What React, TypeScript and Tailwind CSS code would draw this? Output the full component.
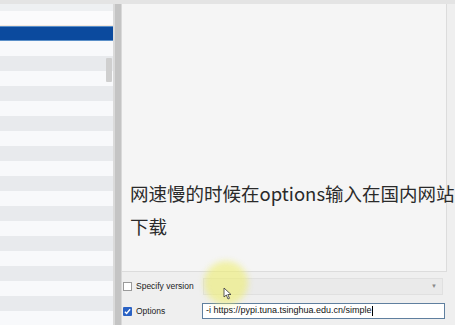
import React from 'react';

const rows = Array.from({ length: 19 }, (_, i) => i);

const App: React.FC = () => {
  return (
    <div className="relative w-[455px] h-[325px] overflow-hidden bg-[#efefef] flex flex-col" style={{ fontFamily: '"Liberation Sans", Arial, sans-serif' }}>
      {/* top strip */}
      <div className="h-[4px] bg-[#e4e4e4]" />

      <div className="flex flex-1 min-h-0">
        {/* package list */}
        <div className="relative w-[113px] shrink-0 flex flex-col overflow-hidden bg-[#f7f8fa]">
          <div className="h-[7px] shrink-0 bg-[#eef0f2]" />
          <div className="h-[15px] shrink-0 bg-[#fbfbfc] border-b border-[#f6e8dc]" />
          <div className="h-[15px] shrink-0 bg-[#0b4a9e] border-y border-[#5a8fc8]" />
          {rows.map((i) => (
            <div key={i} className={`h-[15px] shrink-0 ${i % 2 === 0 ? 'bg-[#f8f9fb]' : 'bg-[#e8eaed]'}`} />
          ))}
          {/* scrollbar thumb */}
          <div className="absolute left-[106px] top-[54px] w-[6px] h-[24px] bg-[#cfcfcf] rounded-[1px]" />
        </div>

        {/* splitter */}
        <div className="w-[9px] shrink-0 flex">
          <div className="w-[2px] bg-[#dadada]" />
          <div className="w-[6px] bg-[#c4c4c4]" />
          <div className="w-[1px] bg-[#d9d9d9]" />
        </div>

        {/* right side */}
        <div className="flex-1 min-w-0 flex flex-col">
          <div className="h-[268px] mr-[8px] bg-[#f5f5f5] border-r border-b border-[#dcdcdc]">
            <div
              className="pt-[173px] pl-[8px] w-[334px] text-[18.5px] leading-[33px] text-[#2a2a2a]"
              style={{ fontFamily: '"Noto Sans CJK SC", "Noto Sans", sans-serif' }}
            >
              网速慢的时候在options输入在国内网站下载
            </div>
          </div>

          <div className="flex flex-col pl-[1px] pt-[6px] gap-[8px] text-[8.5px] text-[#222222]">
            <div className="flex items-center h-[17px]">
              <div className="w-[9px] h-[9px] shrink-0 bg-white border border-[#9a9a9a]" />
              <span className="ml-[4px] w-[67px] shrink-0 whitespace-nowrap">Specify version</span>
              <div className="w-[240px] shrink-0 h-[17px] bg-[#eaeaea] border border-[#e0e0e0] flex items-center justify-end pr-[5px]">
                <span className="text-[6px] text-[#8a8a8a]">▼</span>
              </div>
            </div>
            <div className="flex items-center h-[16px]">
              <div className="w-[9px] h-[9px] shrink-0 bg-[#2a62c4] rounded-[1px] flex items-center justify-center">
                <svg width="7" height="7" viewBox="0 0 8 8" fill="none" stroke="white" strokeWidth="1.6">
                  <path d="M1 4.2 3 6.2 7 1.5" />
                </svg>
              </div>
              <span className="ml-[4px] w-[66px] shrink-0">Options</span>
              <div className="w-[243px] shrink-0 h-[16px] bg-white border border-[#5f7f9f] flex items-center pl-[3px]">
                <span className="text-[9px] text-[#111111] whitespace-nowrap">-i https://pypi.tuna.tsinghua.edu.cn/simple</span>
                <span className="w-px h-[10px] bg-black" />
              </div>
            </div>
          </div>
        </div>
      </div>

      {/* cursor highlight */}
      <div className="absolute left-[204px] top-[261px] w-[44px] h-[44px] rounded-full bg-[#eeee70]/60 blur-[3px]" />
      <svg className="absolute left-[223px] top-[287px]" width="9" height="13" viewBox="0 0 9 13">
        <path d="M1 1 L1 10 L3.3 8 L5 12 L6.5 11.3 L4.8 7.5 L8 7.5 Z" fill="white" stroke="#333" strokeWidth="0.8" />
      </svg>
    </div>
  );
};

export default App;
